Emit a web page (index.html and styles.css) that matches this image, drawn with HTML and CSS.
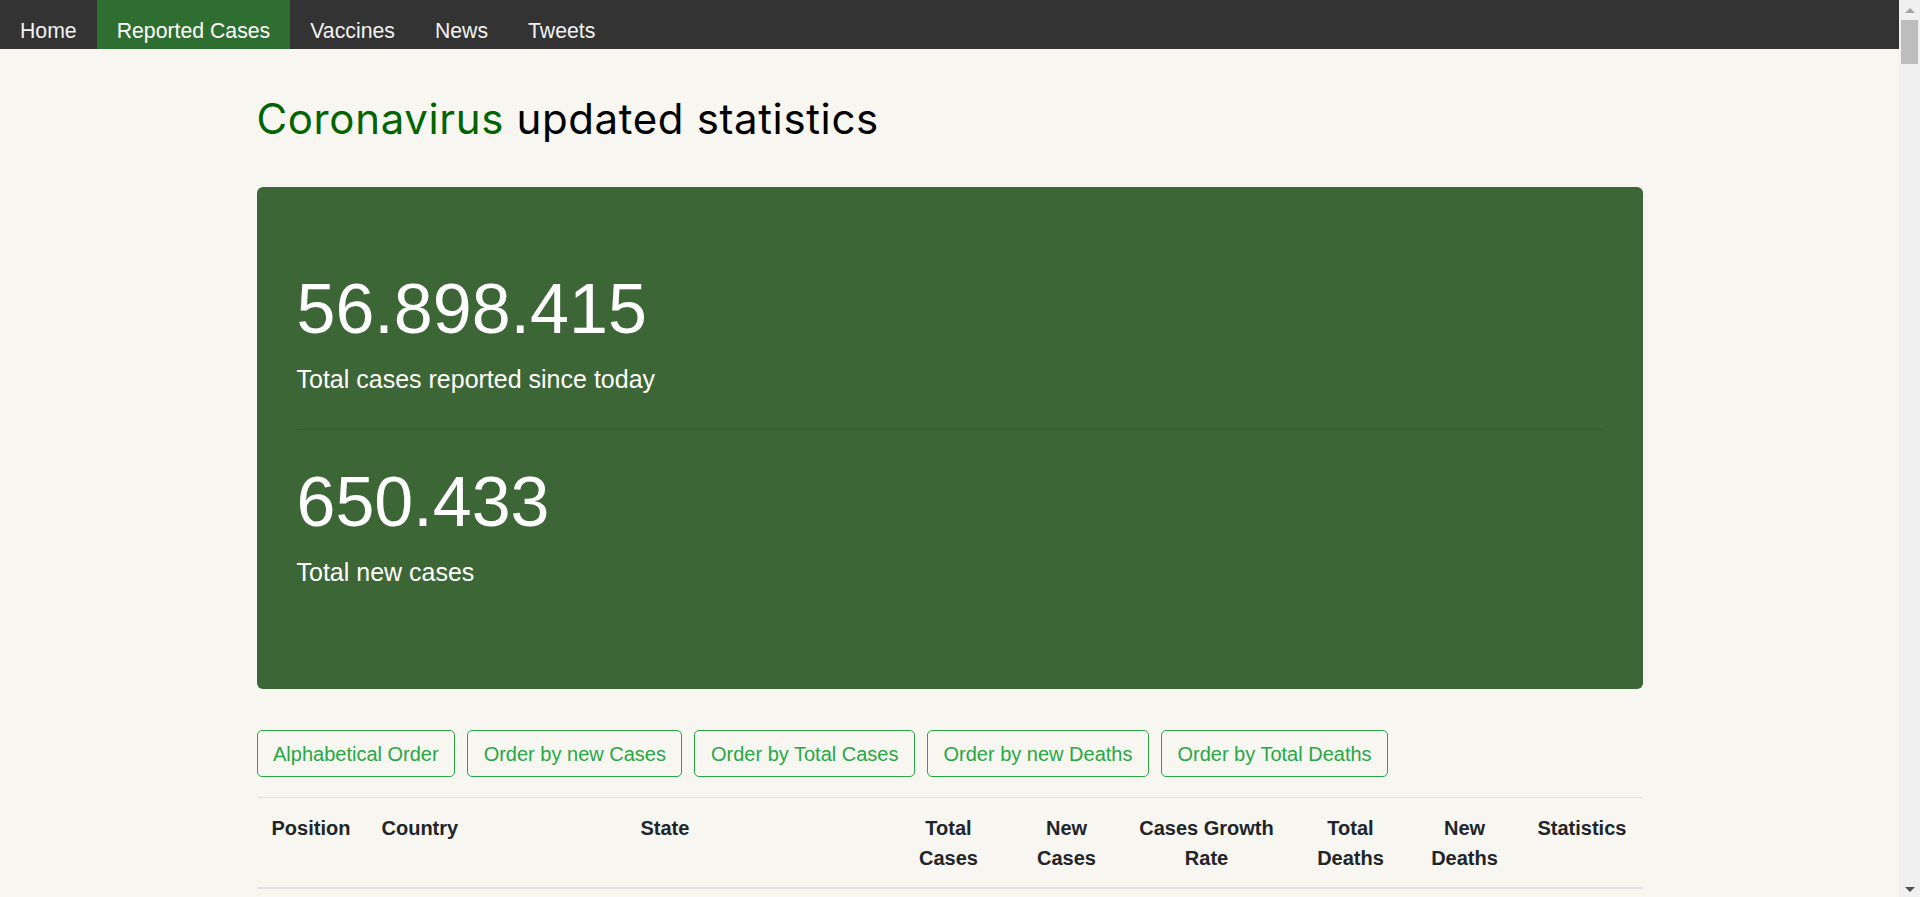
FILE: index.html
```html
<!DOCTYPE html>
<html lang="en">
<head>
<meta charset="utf-8">
<title>Coronavirus updated statistics</title>
<link rel="stylesheet" href="styles.css">
</head>
<body>
<div class="page">
  <div class="main">
    <nav class="topnav">
      <a href="#" class="nav-link">Home</a>
      <a href="#" class="nav-link active">Reported Cases</a>
      <a href="#" class="nav-link">Vaccines</a>
      <a href="#" class="nav-link">News</a>
      <a href="#" class="nav-link">Tweets</a>
    </nav>
    <div class="container">
      <h2 class="title"><span class="title-green">Coronavirus</span> updated statistics</h2>
      <section class="jumbo">
        <h1 class="stat-num">56.898.415</h1>
        <p class="stat-label">Total cases reported since today</p>
        <hr class="divider">
        <h1 class="stat-num">650.433</h1>
        <p class="stat-label">Total new cases</p>
      </section>
      <div class="btn-row">
        <button class="btn">Alphabetical Order</button>
        <button class="btn">Order by new Cases</button>
        <button class="btn">Order by Total Cases</button>
        <button class="btn">Order by new Deaths</button>
        <button class="btn">Order by Total Deaths</button>
      </div>
      <table class="stats-table">
        <colgroup>
          <col class="c-pos"><col class="c-country"><col class="c-state"><col class="c-tc"><col class="c-nc"><col class="c-cgr"><col class="c-td"><col class="c-nd"><col class="c-stat">
        </colgroup>
        <thead>
          <tr>
            <th>Position</th>
            <th>Country</th>
            <th>State</th>
            <th class="center">Total Cases</th>
            <th class="center">New Cases</th>
            <th class="center">Cases Growth Rate</th>
            <th class="center">Total Deaths</th>
            <th class="center">New Deaths</th>
            <th>Statistics</th>
          </tr>
        </thead>
      </table>
    </div>
  </div>
  <div class="scrollbar">
    <div class="sb-btn"><span class="arrow-up"></span></div>
    <div class="sb-thumb"></div>
    <div class="sb-track"></div>
    <div class="sb-btn sb-btn-bottom"><span class="arrow-down"></span></div>
  </div>
</div>
</body>
</html>
```

FILE: styles.css
```css
html, body {
  margin: 0;
  padding: 0;
  height: 100%;
  overflow: hidden;
}

body {
  background: #f7f6f0;
  font-family: "Liberation Sans", Arial, sans-serif;
  color: #212529;
}

.page {
  display: flex;
  height: 897px;
}

.main {
  flex: 1;
  min-width: 0;
  overflow: hidden;
}

/* Top navigation */
.topnav {
  display: flex;
  height: 49px;
  background: #333333;
  overflow: hidden;
}

.nav-link {
  display: block;
  padding: 17px 20px 0;
  font-size: 21.25px;
  line-height: 28px;
  color: #f2f2f2;
  text-decoration: none;
}

.nav-link.active {
  background: #2e6f31;
  color: #ffffff;
}

/* Content */
.container {
  width: 1386px;
  margin: 0 auto;
}

.title {
  font-family: Inter, "Noto Sans", sans-serif;
  font-weight: 400;
  font-size: 42px;
  line-height: 50px;
  letter-spacing: 0.63px;
  color: #000000;
  margin: 45px 0 43px;
}

.title-green {
  color: #006400;
}

.jumbo {
  background: #3c6635;
  border-radius: 6px;
  padding: 80px 40px 78px;
  margin-bottom: 41px;
  color: #ffffff;
}

.stat-num {
  font-size: 70px;
  font-weight: 400;
  line-height: 84px;
  margin: 0 0 10px;
}

.stat-label {
  font-size: 25px;
  line-height: 37.5px;
  margin: 0 0 20px;
}

.divider {
  border: 0;
  border-top: 1px solid rgba(0, 0, 0, 0.1);
  margin: 30px 0;
}

/* Buttons */
.btn-row {
  display: flex;
  gap: 12px;
  margin-bottom: 20px;
}

.btn {
  font-family: "Liberation Sans", Arial, sans-serif;
  font-size: 20px;
  line-height: 30px;
  padding: 7.5px 15.5px;
  border: 1px solid #28a745;
  border-radius: 5px;
  background: transparent;
  color: #28a745;
  cursor: pointer;
}

/* Table */
.stats-table {
  width: 1386px;
  border-collapse: collapse;
  table-layout: fixed;
}

.c-pos { width: 110px; }
.c-country { width: 259px; }
.c-state { width: 257px; }
.c-tc { width: 132px; }
.c-nc { width: 104px; }
.c-cgr { width: 176px; }
.c-td { width: 112px; }
.c-nd { width: 116px; }
.c-stat { width: 120px; }

.stats-table th {
  padding: 15px 15px 14px;
  font-size: 20px;
  line-height: 30px;
  font-weight: 700;
  text-align: left;
  vertical-align: top;
  border-top: 1px solid #dee2e6;
  border-bottom: 2px solid #dee2e6;
  color: #212529;
}

.stats-table th.center {
  text-align: center;
}

/* Scrollbar */
.scrollbar {
  width: 21px;
  flex: none;
  background: #f0f0f0;
  display: flex;
  flex-direction: column;
}

.sb-btn {
  height: 20px;
  display: flex;
  justify-content: center;
  align-items: center;
}

.sb-btn-bottom {
  padding-top: 4px;
  height: 16px;
}

.arrow-up {
  width: 0;
  height: 0;
  border-left: 5px solid transparent;
  border-right: 5px solid transparent;
  border-bottom: 5px solid #a3a3a3;
}

.arrow-down {
  width: 0;
  height: 0;
  border-left: 5px solid transparent;
  border-right: 5px solid transparent;
  border-top: 5px solid #505050;
}

.sb-thumb {
  height: 44px;
  margin: 0 2px;
  background: #bdbdbd;
}

.sb-track {
  flex: 1;
}
```
